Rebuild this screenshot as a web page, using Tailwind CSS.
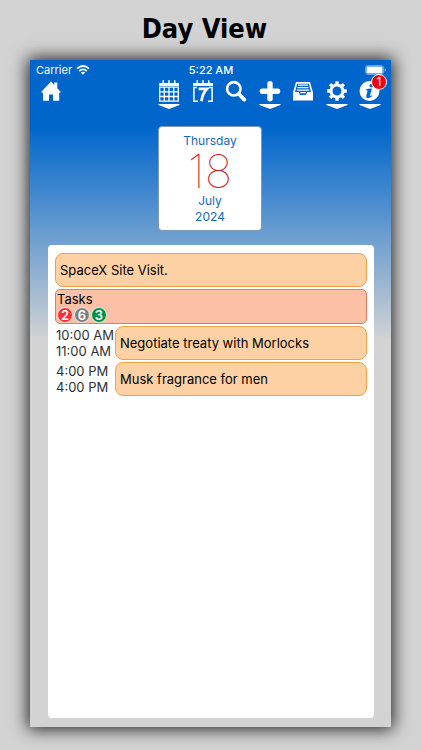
<!DOCTYPE html>
<html lang="en">
<head>
<meta charset="utf-8">
<meta name="viewport" content="width=device-width, initial-scale=1">
<title>Day View</title>
<script src="https://cdn.jsdelivr.net/npm/@tailwindcss/browser@4"></script>
</head>
<body class="flex min-h-screen flex-col bg-[#d3d3d3] pr-[31px] pb-[23px] pl-[30px] font-['Inter','Liberation_Sans',sans-serif]">
<h1 class="pt-[9px] pr-3 pb-[11px] text-center font-['DejaVu_Sans_Condensed','DejaVu_Sans',sans-serif] text-[27px] leading-10 font-bold text-black">Day View</h1>
<main class="flex flex-1 flex-col bg-[linear-gradient(#0066cc_10%,#d3d3d3_42%)] pr-[17px] pb-[9px] pl-[18px] shadow-[0_0_16px_2px_#000000d9]">
  <div class="-mx-3 grid grid-cols-3 items-center pt-1 text-[11px] leading-3 text-white">
    <div class="flex items-center gap-1">
      <span>Carrier</span>
      <svg class="h-[10px] w-[14px]" viewBox="0 0 14 10" fill="none" stroke="#fff" stroke-width="1.8" aria-hidden="true"><path d="M1 3.6Q7-1.6 13 3.6M3.2 6Q7 2.8 10.800 6"/><path d="M7 9.800 4.900 7.700Q7 6 9.100 7.700Z" fill="#fff" stroke="none"/></svg>
    </div>
    <span class="text-center font-medium">5:22 AM</span>
    <svg class="h-[10px] w-[21px] justify-self-end" viewBox="0 0 21 10" aria-label="Battery full"><rect x=".5" y=".5" width="18" height="9" rx="2.500" fill="none" stroke="#fff" stroke-opacity=".4"/><rect x="1.500" y="1.500" width="16" height="7" rx="1.300" fill="#fff"/><path d="M19.600 3.200q1.200.5 1.200 1.800t-1.200 1.800z" fill="#fff" fill-opacity=".6"/></svg>
  </div>
  <nav class="-mr-[7px] -ml-2 flex items-start justify-between pt-1" aria-label="Tools">
    <button class="ml-px" aria-label="Home"><svg class="h-[22px] w-[20px]" viewBox="0 0 20 22" fill="#fff"><path d="M10 1.500 13.300 5V2.500h3V8.200L19.800 12l-1 .7H18.200V20.700H12V14.500H8V20.700H2V12.700H1.200L.2 12Z"/></svg></button>
    <div class="flex w-[223px] items-start justify-between">
      <button aria-label="Month"><svg class="h-[30px] w-[22px]" viewBox="0 0 22 30"><path fill="#fff" d="M1 3h3.500V.3H6V3h4.200V.3h1.600V3H16V.3h1.500V3H21v3H1z"/><path fill="none" stroke="#fff" stroke-width="1.300" d="M1.700 7.200h18.600v14H1.700zM1.700 11.900h18.600M1.700 16.500h18.600M6.300 7v14M11 7v14M15.700 7v14"/><path fill="#fff" d="M.5 24h21v1L11 29 .5 25z"/></svg></button>
      <button aria-label="Week"><svg class="h-[30px] w-[22px]" viewBox="0 0 22 30"><path fill="#fff" d="M1 3h3.500V.3H6V3h4.200V.3h1.600V3H16V.3h1.500V3H21v3H1z"/><path fill="none" stroke="#fff" stroke-width="1.500" d="M5 7.500H1.900V21.300H6M17 7.500h3.100V21.300H16"/><path fill="none" stroke="#fff" stroke-width="2.800" d="M6.600 8.900h8.300Q10.500 13.500 9.400 21.300"/></svg></button>
      <button aria-label="Search"><svg class="h-[22px] w-[22px]" viewBox="0 0 22 22" fill="none" stroke="#fff"><circle cx="8.800" cy="8.800" r="6.700" stroke-width="2.600"/><path d="m13.800 14 5.400 5.600" stroke-width="3.800" stroke-linecap="round"/></svg></button>
      <button aria-label="Add"><svg class="h-[30px] w-[22px]" viewBox="0 0 22 30" fill="#fff"><path d="M11 3.800V18.800M3.400 11.300H18.600" stroke="#fff" stroke-width="5.400" stroke-linecap="round"/><path d="M.5 24h21v1L11 29 .5 25z"/></svg></button>
      <button aria-label="Inbox"><svg class="h-[22px] w-[22px]" viewBox="0 0 22 22"><path d="M4 2H18L21 12.500V20.500H1V12.500Z" fill="#fff"/><path d="M5.200 3.700H16.800L19 12H15.200L14 15H8L6.800 12H3Z" fill="#0066cc"/><path d="M6 5.200H16M5.400 7.700H16.600M4.800 10.200H17.200M8.300 12.700h5.400" stroke="#fff" stroke-width="1.300"/></svg></button>
      <button aria-label="Settings"><svg class="h-[30px] w-[22px]" viewBox="0 0 22 30" fill="none" stroke="#fff"><circle cx="11" cy="11" r="6" stroke-width="3"/><path stroke-width="3.400" d="M11 1.200v3M11 17.800v3M1.200 11h3M17.800 11h3M4.100 4.100l2 2M15.900 15.900l2 2M17.900 4.100l-2 2M6.100 15.900l-2 2"/><path fill="#fff" stroke="none" d="M.5 24h21v1L11 29 .5 25z"/></svg></button>
      <button class="relative" aria-label="Information, 1 notice"><svg class="h-[30px] w-[22px]" viewBox="0 0 22 30" fill="#fff"><circle cx="10.500" cy="11" r="10"/><circle cx="12.300" cy="5.600" r="1.900" fill="#0066cc"/><path d="M6.800 9.600Q8.500 8.400 12.900 8.400L11 15.600Q10.900 16.600 12.900 15.300L13.200 16Q10.600 18.400 8.500 18.200 6.800 17.900 7.300 15.700L8.600 10.800Q8.700 10 6.900 10.300Z" fill="#0066cc"/><path d="M.5 24h21v1L11 29 .5 25z"/></svg>
        <span class="absolute -top-[6px] -right-[6px] flex size-4 items-center justify-center rounded-full border border-white bg-[#f00014] text-xs text-white">1</span></button>
    </div>
  </nav>
  <time datetime="2024-07-18" class="mt-4 mr-0.5 flex h-[105px] w-[104px] flex-col items-center self-center rounded-[4px] border border-[#7c99b8] bg-white pt-1.5 text-[12px] leading-4 text-[#1269bd]">
    <span>Thursday</span>
    <span class="py-1 text-[46px] leading-9 font-thin text-[#d01828]">18</span>
    <span>July</span>
    <span>2024</span>
  </time>
  <section class="mt-3.5 flex flex-1 flex-col gap-0.5 rounded-[4px] bg-white px-[7px] pt-2 text-[13px] leading-4 text-black" aria-label="Agenda">
    <div class="flex h-[34px] items-center rounded-lg border border-[#f0a04b] bg-[#fed1a4] px-1">SpaceX Site Visit.</div>
    <div class="h-[35px] rounded-[5px] border border-[#de7c65] bg-[#fbc0a5] px-px pt-px">
      <h2>Tasks</h2>
      <div class="flex gap-px font-semibold text-white">
        <span class="flex size-4 items-center justify-center rounded-full border border-white/80 bg-[#fb3035]">2</span>
        <span class="flex size-4 items-center justify-center rounded-full border border-white/80 bg-[#808080]">6</span>
        <span class="flex size-4 items-center justify-center rounded-full border border-white/80 bg-[#009347]">3</span>
      </div>
    </div>
    <div class="flex h-[34px] items-center">
      <div class="w-[60px] shrink-0 pl-px whitespace-nowrap text-[#303030]"><p>10:00 AM</p><p>11:00 AM</p></div>
      <div class="flex h-full flex-1 items-center rounded-lg border border-[#f0a04b] bg-[#fed1a4] px-1">Negotiate treaty with Morlocks</div>
    </div>
    <div class="flex h-[34px] items-center">
      <div class="w-[60px] shrink-0 pl-px whitespace-nowrap text-[#303030]"><p>4:00 PM</p><p>4:00 PM</p></div>
      <div class="flex h-full flex-1 items-center rounded-lg border border-[#f0a04b] bg-[#fed1a4] px-1">Musk fragrance for men</div>
    </div>
  </section>
</main>
</body>
</html>
